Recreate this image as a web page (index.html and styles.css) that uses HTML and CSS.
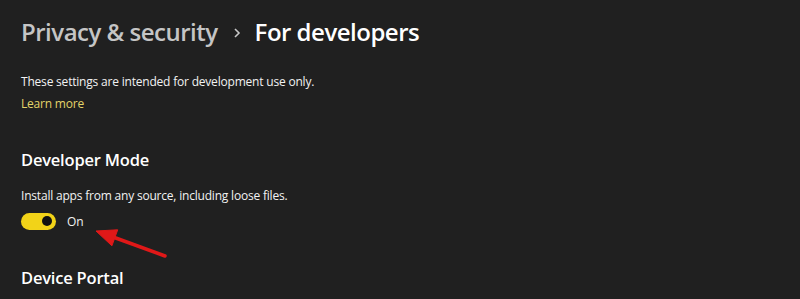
FILE: index.html
```html
<!DOCTYPE html>
<html lang="en">
<head>
    <meta charset="UTF-8">
    <meta name="viewport" content="width=device-width, initial-scale=1.0">
    <title>For developers</title>
    <link rel="stylesheet" href="styles.css">
</head>
<body>
    <div class="page">
        <h1 class="crumbs">
            <span class="crumb-parent">Privacy &amp; security</span>
            <span class="chevron">
                <svg width="10" height="12" viewBox="0 0 10 12"><path d="M3 2 L7 6 L3 10" fill="none" stroke="#c8c8c8" stroke-width="1.6"/></svg>
            </span>
            <span class="crumb-current">For developers</span>
        </h1>
        <p class="intro">These settings are intended for development use only.</p>
        <a class="link" href="#">Learn more</a>

        <h2 class="section-title">Developer Mode</h2>
        <p class="desc">Install apps from any source, including loose files.</p>
        <div class="toggle-row">
            <span class="toggle"><span class="knob"></span></span>
            <span class="toggle-label">On</span>
            <svg class="arrow" width="100" height="50" viewBox="0 0 100 50">
                <path d="M38 25 L90 44" stroke="#e01818" stroke-width="3.5" stroke-linecap="round"/>
                <path d="M21 19 L42.7 17.8 L36.9 33.8 Z" fill="#e01818" stroke="#e01818" stroke-width="1" stroke-linejoin="round"/>
            </svg>
        </div>

        <h2 class="section-title portal">Device Portal</h2>
    </div>
</body>
</html>
```

FILE: styles.css
```css
html, body {
    margin: 0;
    background-color: #202020;
}
body {
    font-family: "Open Sans", "Noto Sans", sans-serif;
    color: #ffffff;
    overflow: hidden;
}
.page {
    padding: 14px 21px 0;
}
.crumbs {
    display: flex;
    align-items: center;
    margin: 0;
    font-size: 24px;
    font-weight: 600;
    letter-spacing: -0.5px;
    line-height: 36px;
}
.crumb-parent {
    color: #c5c5c5;
}
.chevron {
    display: flex;
    margin: 2px 13px 0 14px;
}
.crumb-current {
    color: #ffffff;
}
.intro {
    margin: 23px 0 0;
    font-size: 12px;
    letter-spacing: -0.2px;
    line-height: 18px;
    color: #f2f2f2;
}
.link {
    display: inline-block;
    margin-top: 4px;
    font-size: 12px;
    letter-spacing: -0.2px;
    line-height: 18px;
    color: #e3d46a;
    text-decoration: none;
}
.section-title {
    margin: 35px 0 0;
    font-size: 16.5px;
    font-weight: 600;
    letter-spacing: -0.2px;
    line-height: 24px;
}
.desc {
    margin: 15px 0 0;
    font-size: 12px;
    letter-spacing: -0.2px;
    line-height: 18px;
    color: #f2f2f2;
}
.toggle-row {
    position: relative;
    display: flex;
    align-items: center;
    margin-top: 7px;
    height: 18px;
}
.toggle {
    display: flex;
    align-items: center;
    justify-content: flex-end;
    width: 35px;
    height: 17px;
    border-radius: 9px;
    background-color: #f2d318;
    box-sizing: border-box;
    padding-right: 4px;
}
.knob {
    width: 10px;
    height: 10px;
    border-radius: 50%;
    background-color: #111111;
}
.toggle-label {
    margin-left: 11px;
    font-size: 12px;
    color: #f2f2f2;
}
.arrow {
    position: absolute;
    left: 54px;
    top: 0;
}
.portal {
    margin-top: 36px;
}
```
